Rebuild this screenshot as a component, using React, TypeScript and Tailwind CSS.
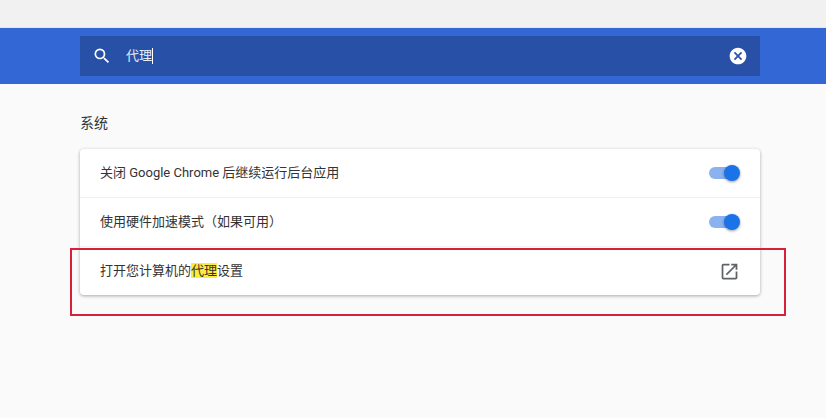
export default function App() {
  const font = "font-['Roboto','Noto_Sans_CJK_SC',sans-serif]";
  const Toggle = () => (
    <div className="relative mr-[3px] h-[12px] w-[28px] shrink-0 rounded-full bg-[#8ab1f0]">
      <div className="absolute right-[-3px] top-[-2px] h-[16px] w-[16px] rounded-full bg-[#1a73e8] shadow-[0_1px_3px_rgba(0,0,0,0.4)]" />
    </div>
  );
  return (
    <div className={`relative h-[418px] w-[826px] overflow-hidden bg-[#fafafa] ${font}`}>
      <div className="h-[27px] bg-[#f1f1f1]" />
      <div className="h-px bg-[#e4e4ea]" />
      <div className="flex h-14 items-center bg-[#3367d6] pl-20 pr-[66px]">
        <div className="flex h-10 w-full items-center bg-[#2850a6] pl-[12px] pr-[12px] text-white">
          <svg width="20" height="20" viewBox="0 0 24 24" fill="white" className="shrink-0">
            <path d="M15.5 14h-.79l-.28-.27A6.47 6.47 0 0 0 16 9.5 6.5 6.5 0 1 0 9.5 16c1.61 0 3.09-.59 4.23-1.57l.27.28v.79l5 4.99L20.49 19l-4.99-5zm-6 0C7.01 14 5 11.99 5 9.5S7.01 5 9.5 5 14 7.01 14 9.5 11.99 14 9.5 14z" />
          </svg>
          <span className="ml-[14px] text-[13px] leading-5 text-[#e6edfb]">代理</span>
          <div className="h-[16px] w-px bg-white" />
          <div className="flex-1" />
          <svg width="20" height="20" viewBox="0 0 24 24" fill="white" className="shrink-0">
            <path d="M12 2C6.47 2 2 6.47 2 12s4.47 10 10 10 10-4.47 10-10S17.53 2 12 2zm5 13.59L15.59 17 12 13.41 8.41 17 7 15.59 10.59 12 7 8.41 8.41 7 12 10.59 15.59 7 17 8.41 13.41 12 17 15.59z" />
          </svg>
        </div>
      </div>

      <div className="pl-20 pr-[66px]">
        <h2 className="mt-[29px] text-[14px] font-normal leading-5 text-[#333]">系统</h2>
        <div className="mt-[16px] rounded-[4px] bg-white text-[13px] text-[#333] shadow-[0_1px_3px_rgba(60,64,67,0.3),0_1px_3px_1px_rgba(60,64,67,0.1)]">
          <div className="flex h-[48px] items-center justify-between pl-5 pr-5">
            <span>关闭 Google Chrome 后继续运行后台应用</span>
            <Toggle />
          </div>
          <div className="flex h-[49px] items-center justify-between border-t border-[#f0f0f0] pl-5 pr-5">
            <span>使用硬件加速模式（如果可用）</span>
            <Toggle />
          </div>
          <div className="flex h-[49px] items-center justify-between border-t border-[#f0f0f0] pl-5 pr-5">
            <span>
              打开您计算机的<span className="bg-[#ffeb3b]">代理</span>设置
            </span>
            <svg width="21" height="21" viewBox="0 0 24 24" fill="#5f6368" className="shrink-0">
              <path d="M19 19H5V5h7V3H5a2 2 0 0 0-2 2v14a2 2 0 0 0 2 2h14c1.1 0 2-.9 2-2v-7h-2v7zM14 3v2h3.59l-9.83 9.83 1.41 1.41L19 6.41V10h2V3h-7z" />
            </svg>
          </div>
        </div>
      </div>

      <div className="absolute left-[70px] top-[248px] h-[68px] w-[716px] border-2 border-[#d9203a]" />
    </div>
  );
}
